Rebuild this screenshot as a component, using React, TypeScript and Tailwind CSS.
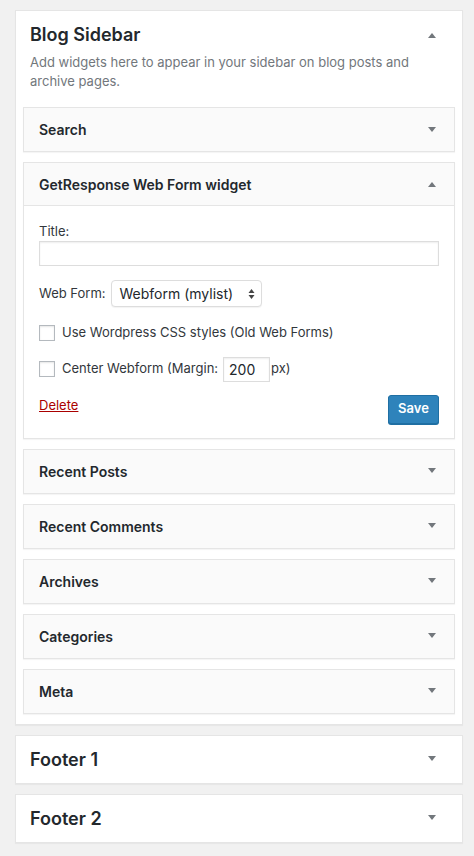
const font = { fontFamily: 'Inter, Roboto, "Noto Sans", sans-serif' };

function Caret({ up = false }: { up?: boolean }) {
  return (
    <svg width="10" height="6" viewBox="0 0 10 6" className="shrink-0">
      {up ? <path d="M1 6 L5 1 L9 6 Z" fill="#72777c" /> : <path d="M1 0 L9 0 L5 5 Z" fill="#72777c" />}
    </svg>
  );
}

function Widget({ title }: { title: string }) {
  return (
    <div className="bg-[#fafafa] border border-[#e5e5e5] shadow-[0_1px_1px_rgba(0,0,0,0.04)] h-[45px] pl-[15px] pr-[17px] flex items-center justify-between">
      <span className="text-[14px] font-semibold text-[#23282d]">{title}</span>
      <Caret />
    </div>
  );
}

function Checkbox() {
  return <span className="w-4 h-4 border border-[#b4b9be] bg-white shadow-[inset_0_1px_2px_rgba(0,0,0,0.1)] shrink-0" />;
}

export default function App() {
  return (
    <div className="min-h-screen bg-[#f1f1f1] pl-[15px] pr-[11px] pt-[10px] pb-3 text-[#32373c]" style={font}>
      <div className="bg-white border border-[#e5e5e5] shadow-[0_1px_1px_rgba(0,0,0,0.04)] pb-[10px]">
        <div className="flex items-center justify-between pl-[14px] pr-[25px] pt-[12px]">
          <h2 className="text-[18px] font-semibold text-[#23282d] leading-[24px]">Blog Sidebar</h2>
          <Caret up />
        </div>
        <p className="text-[13px] leading-[19px] text-[#72777c] pl-[14px] pr-4 mt-[6px]">
          Add widgets here to appear in your sidebar on blog posts and archive pages.
        </p>
        <div className="px-[7px] mt-[16px] flex flex-col gap-[10px]">
          <Widget title="Search" />

          <div className="border border-[#e5e5e5] bg-white shadow-[0_1px_1px_rgba(0,0,0,0.04)]">
            <div className="bg-[#fafafa] border-b border-[#e5e5e5] h-[43px] pl-[15px] pr-[17px] flex items-center justify-between">
              <span className="text-[14px] font-semibold text-[#23282d]">GetResponse Web Form widget</span>
              <Caret up />
            </div>
            <div className="px-[15px] pt-[16px] pb-[14px] text-[13px]">
              <div className="leading-[18px]">Title:</div>
              <div className="mt-[1px] h-[25px] border border-[#ddd] shadow-[inset_0_1px_2px_rgba(0,0,0,0.07)] bg-white" />
              <div className="flex items-center gap-[5px] mt-[14px]">
                <span>Web Form:</span>
                <div className="w-[151px] h-[27px] border border-[#ddd] rounded-[4px] bg-white flex items-center justify-between pl-[8px] pr-[6px] shadow-[0_1px_1px_rgba(0,0,0,0.05)]">
                  <span className="text-[14px] text-[#23282d]">Webform (mylist)</span>
                  <svg width="7" height="12" viewBox="0 0 7 12">
                    <path d="M0.5 5 L3.5 1 L6.5 5 Z M0.5 7 L3.5 11 L6.5 7 Z" fill="#444" />
                  </svg>
                </div>
              </div>
              <div className="flex items-center gap-[7px] mt-[16px]">
                <Checkbox />
                <span>Use Wordpress CSS styles (Old Web Forms)</span>
              </div>
              <div className="flex items-center gap-[7px] mt-[14px]">
                <Checkbox />
                <span>Center Webform (Margin:</span>
                <span className="w-[47px] h-[25px] border border-[#ddd] flex items-center pl-[5px] text-[14px] text-[#23282d] shadow-[inset_0_1px_2px_rgba(0,0,0,0.07)] -ml-[2px] mr-[-6px]">200</span>
                <span>px)</span>
              </div>
              <div className="flex items-start justify-between mt-[11px]">
                <a className="text-[#a00] underline mt-[3px]">Delete</a>
                <button className="h-[29px] w-[51px] rounded-[3px] bg-[#2e83bb] border border-[#1f6fa3] shadow-[0_1px_0_#1f6fa3] text-white text-[13px] font-semibold mt-[2px]">
                  Save
                </button>
              </div>
            </div>
          </div>

          <Widget title="Recent Posts" />
          <Widget title="Recent Comments" />
          <Widget title="Archives" />
          <Widget title="Categories" />
          <Widget title="Meta" />
        </div>
      </div>

      <div className="mt-[10px] bg-white border border-[#e5e5e5] shadow-[0_1px_1px_rgba(0,0,0,0.04)] h-[49px] pl-[14px] pr-[25px] flex items-center justify-between">
        <span className="text-[18px] font-semibold text-[#23282d]">Footer 1</span>
        <Caret />
      </div>
      <div className="mt-[10px] bg-white border border-[#e5e5e5] shadow-[0_1px_1px_rgba(0,0,0,0.04)] h-[49px] pl-[14px] pr-[25px] flex items-center justify-between">
        <span className="text-[18px] font-semibold text-[#23282d]">Footer 2</span>
        <Caret />
      </div>
    </div>
  );
}
